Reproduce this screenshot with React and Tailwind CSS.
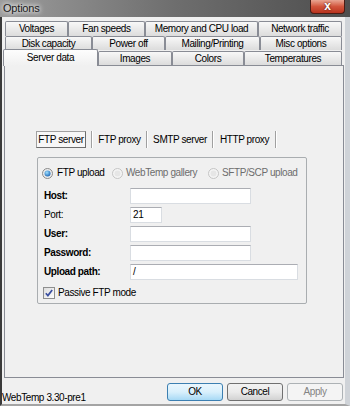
const topTabs = [
  [
    { label: 'Voltages', w: 'w-[63px]' },
    { label: 'Fan speeds', w: 'w-[77px]' },
    { label: 'Memory and CPU load', w: 'w-[113px]' },
    { label: 'Network traffic', w: 'w-[84px]' },
  ],
  [
    { label: 'Disk capacity', w: 'w-[87px]' },
    { label: 'Power off', w: 'w-[73px]' },
    { label: 'Mailing/Printing', w: 'w-[95px]' },
    { label: 'Misc options', w: 'w-[82px]' },
  ],
];

const tabClass =
  'flex items-center justify-center border border-b-0 border-[#898c95] rounded-t-[2px] bg-gradient-to-b from-[#f8f8f8] to-[#dcdcdc] text-black';

function Radio({ checked, disabled }) {
  return (
    <svg width="11" height="11" viewBox="0 0 11 11" className="shrink-0">
      <defs>
        <radialGradient id="rdot" cx="0.4" cy="0.35" r="0.7">
          <stop offset="0" stopColor="#9fe0ff" />
          <stop offset="1" stopColor="#1a64b4" />
        </radialGradient>
      </defs>
      <circle cx="5.5" cy="5.5" r="5" fill={disabled ? '#f4f4f4' : '#ececec'} stroke={disabled ? '#c4c4c4' : '#8a8a8a'} />
      <circle cx="5.5" cy="5.5" r="3" fill={checked ? 'url(#rdot)' : '#e6e6e6'} />
    </svg>
  );
}

function Field({ label, bold, width, value }) {
  return (
    <div className="flex items-center h-[16px]">
      <span className={`w-[86px] ml-[6px] ${bold ? 'font-bold' : ''}`}>{label}</span>
      <div className={`${width} h-[16px] bg-white border border-[#d9dde2] border-t-[#abadb3] flex items-center pl-[2px]`}>
        {value}
      </div>
    </div>
  );
}

function Button({ children, variant }) {
  const styles = {
    default:
      'border-[#3c7fb1] bg-gradient-to-b from-[#eaf6fd] via-[#d9f0fc] to-[#a7d9f5] text-black',
    normal:
      'border-[#707070] bg-gradient-to-b from-[#f2f2f2] via-[#ebebeb] to-[#d2d2d2] text-black',
    disabled: 'border-[#adb2b5] bg-[#f4f4f4] text-[#838383]',
  };
  return (
    <div className={`w-[56px] h-[18px] border rounded-[3px] flex items-center justify-center ${styles[variant]}`}>
      {children}
    </div>
  );
}

export default function App() {
  return (
    <div className="w-[350px] h-[406px] flex flex-col overflow-hidden whitespace-nowrap bg-gradient-to-r from-[#9c9c9c] via-[#6e6e6e] to-[#4e4e4e] font-['Liberation_Sans',sans-serif] text-[10px] tracking-[-0.4px] leading-none text-black">
      {/* title bar */}
      <div className="h-[17px] flex items-start shrink-0">
        <span className="ml-[3px] mt-[3px] text-[11px] tracking-[-0.2px] text-[#1a1a1a] [text-shadow:0_0_4px_#ffffff,0_0_6px_#ffffff]">
          Options
        </span>
        <div className="ml-auto mr-[5px] w-[35px] h-[14px] rounded-b-[4px] border border-t-0 border-[#4a1c14] bg-gradient-to-b from-[#e8a592] via-[#d2553c] to-[#b9321d] flex items-center justify-center">
          <span className="text-white font-bold text-[12px] -mt-[2px] [text-shadow:0_0_2px_#3a0c06]">x</span>
        </div>
      </div>

      {/* window body */}
      <div className="flex-1 flex border-l-2 border-[#3a3a3a] border-r-[5px] border-r-[#cfd3d8] border-b-2 border-b-[#a4a4a4]">
        <div className="flex-1 bg-[#f0f0f0] flex flex-col">
          {/* tab rows */}
          <div className="mt-[4px] ml-[3px] w-[337px] flex flex-col">
            {topTabs.map((row, i) => (
              <div key={i} className={`flex ${i === 0 ? 'h-[15px]' : 'h-[14px]'}`}>
                {row.map((t) => (
                  <div key={t.label} className={`${tabClass} ${t.w} h-full`}>
                    {t.label}
                  </div>
                ))}
              </div>
            ))}
            <div className="flex items-end h-[15px]">
              <div className="relative z-10 -ml-[2px] w-[95px] h-[17px] -mb-px flex items-center justify-center border border-b-0 border-[#898c95] rounded-t-[2px] bg-gradient-to-b from-[#fdfdfd] to-[#f0f0f0]">
                Server data
              </div>
              <div className={`${tabClass} w-[74px] h-[14px]`}>Images</div>
              <div className={`${tabClass} w-[72px] h-[14px]`}>Colors</div>
              <div className={`${tabClass} w-[98px] h-[14px]`}>Temperatures</div>
            </div>
          </div>

          {/* tab panel */}
          <div className="ml-[2px] w-[340px] h-[313px] border border-[#898c95] bg-[#f0f0f0] flex flex-col">
            {/* inner tabs */}
            <div className="mt-[65px] ml-[31px] flex items-center h-[17px]">
              <div className="w-[50px] h-[17px] border border-[#a0a0a0] border-r-[#6d6d6d] border-b-[#6d6d6d] bg-[#f7f7f7] flex items-center justify-center">
                FTP server
              </div>
              <div className="ml-[5px] w-[2px] h-[17px] border-l border-[#a0a0a0] border-r border-r-white" />
              <div className="w-[53px] flex justify-center">FTP proxy</div>
              <div className="w-[2px] h-[17px] border-l border-[#a0a0a0] border-r border-r-white" />
              <div className="w-[64px] flex justify-center">SMTP server</div>
              <div className="w-[2px] h-[17px] border-l border-[#a0a0a0] border-r border-r-white" />
              <div className="w-[61px] flex justify-center">HTTP proxy</div>
              <div className="w-[2px] h-[17px] border-l border-[#a0a0a0] border-r border-r-white" />
            </div>

            {/* group box */}
            <div className="mt-[9px] ml-[32px] w-[270px] h-[147px] border border-[#a9adb0] rounded-[2px] flex flex-col">
              <div className="mt-[9px] ml-[4px] h-[12px] flex items-center">
                <div className="w-[70px] flex items-center">
                  <Radio checked />
                  <span className="ml-[4px]">FTP upload</span>
                </div>
                <div className="w-[96px] flex items-center text-[#6d6d6d]">
                  <Radio disabled />
                  <span className="ml-[3px]">WebTemp gallery</span>
                </div>
                <div className="flex items-center text-[#6d6d6d]">
                  <Radio disabled />
                  <span className="ml-[3px]">SFTP/SCP upload</span>
                </div>
              </div>

              <div className="mt-[9px] flex flex-col gap-[3px]">
                <Field label="Host:" bold width="w-[121px]" />
                <Field label="Port:" width="w-[32px]" value="21" />
                <Field label="User:" bold width="w-[121px]" />
                <Field label="Password:" bold width="w-[121px]" />
                <Field label="Upload path:" bold width="w-[168px]" value="/" />
              </div>

              <div className="mt-[7px] ml-[5px] h-[12px] flex items-center">
                <svg width="12" height="12" viewBox="0 0 12 12">
                  <defs>
                    <linearGradient id="cb" x1="0" y1="0" x2="1" y2="1">
                      <stop offset="0" stopColor="#dcdcdc" />
                      <stop offset="1" stopColor="#ffffff" />
                    </linearGradient>
                  </defs>
                  <rect x="0.5" y="0.5" width="11" height="11" fill="url(#cb)" stroke="#8e8f8f" />
                  <path d="M2.8 6.2 L4.9 8.6 L9.2 2.9" fill="none" stroke="#3a4fa0" strokeWidth="1.7" />
                </svg>
                <span className="ml-[3px]">Passive FTP mode</span>
              </div>
            </div>
          </div>

          {/* bottom bar */}
          <div className="flex-1 flex items-start justify-between">
            <span className="self-end mb-[1px]">WebTemp 3.30-pre1</span>
            <div className="mt-[5px] mr-[2px] flex gap-[4px]">
              <Button variant="default">OK</Button>
              <Button variant="normal">Cancel</Button>
              <Button variant="disabled">Apply</Button>
            </div>
          </div>
        </div>
      </div>
    </div>
  );
}
